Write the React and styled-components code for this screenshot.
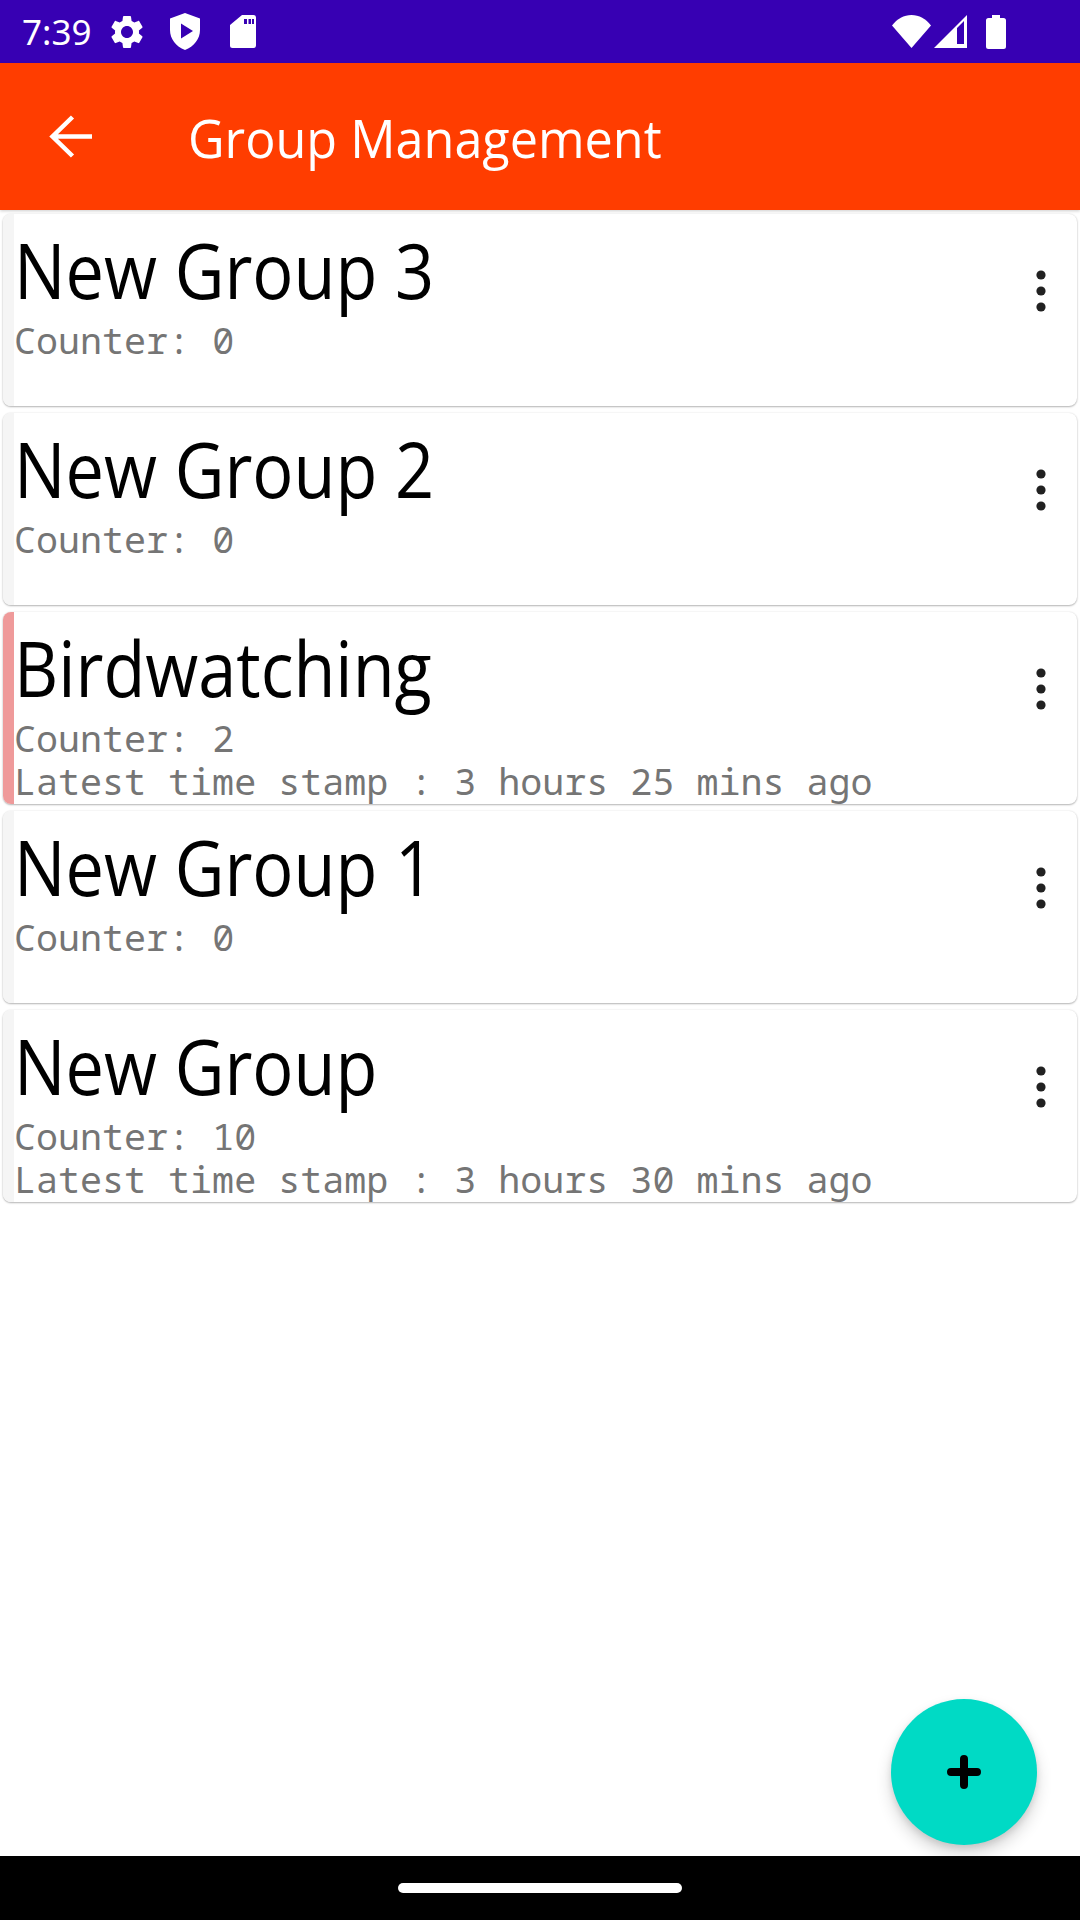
import React from 'react';
import styled, { createGlobalStyle } from 'styled-components';

const GlobalStyle = createGlobalStyle`
  html, body {
    margin: 0;
    padding: 0;
    background: #ffffff;
  }
`;

const Screen = styled.div`
  position: relative;
  width: 1080px;
  height: 1920px;
  display: flex;
  flex-direction: column;
  overflow: hidden;
  background: #ffffff;
  font-family: "Open Sans", "Noto Sans", sans-serif;
`;

const StatusBar = styled.div`
  height: 63px;
  flex: none;
  display: flex;
  align-items: center;
  padding: 0 74px 0 22px;
  background: #3700b3;
  color: #ffffff;
`;

const Clock = styled.span`
  font-family: "Noto Sans", sans-serif;
  font-size: 35px;
  line-height: 63px;
  width: 85px;
`;

const NotifyIcons = styled.div`
  display: flex;
  align-items: center;
  gap: 23px;
  flex: 1;
`;

const SystemIcons = styled.div`
  display: flex;
  align-items: center;
  gap: 3px;
`;

const AppBar = styled.header`
  height: 147px;
  flex: none;
  display: flex;
  align-items: center;
  background: #ff3d00;
  color: #ffffff;
  box-shadow: 0 1px 3px rgba(0, 0, 0, 0.2);
  z-index: 1;
`;

const BackButton = styled.div`
  width: 188px;
  padding-left: 48px;
  box-sizing: border-box;
  display: flex;
  align-items: center;
`;

const AppTitle = styled.h1`
  margin: 3px 0 0;
  font-size: 53px;
  line-height: 72px;
  font-weight: 400;
  transform: scaleX(0.95);
  transform-origin: left center;
`;

const GroupList = styled.main`
  flex: 1;
  padding: 4px 3px 0;
`;

const Card = styled.article`
  height: 192px;
  margin-bottom: 7px;
  display: flex;
  border-radius: 8px;
  overflow: hidden;
  background: #ffffff;
  box-shadow: 0 1px 2px rgba(0, 0, 0, 0.28), 0 0 2px rgba(0, 0, 0, 0.1);
`;

const Stripe = styled.div`
  width: 11px;
  flex: none;
  background: ${({ $active }) => ($active ? '#ef9a9a' : '#f5f5f5')};
`;

const CardBody = styled.div`
  flex: 1;
  min-width: 0;
  padding-top: 7px;
`;

// the reference font is narrower than anything installed, so squeeze Open Sans
const GroupName = styled.div`
  font-size: 76px;
  line-height: 98px;
  color: #000000;
  transform: scaleX(0.9);
  transform-origin: left center;
`;

const Meta = styled.div`
  font-family: "Noto Sans Mono", "DejaVu Sans Mono", monospace;
  font-size: 36.7px;
  line-height: 43px;
  color: #757575;
  white-space: nowrap;
`;

const MenuButton = styled.div`
  width: 72px;
  flex: none;
  padding-top: 56px;
  display: flex;
  justify-content: center;
`;

const Fab = styled.button`
  position: absolute;
  left: 891px;
  top: 1699px;
  width: 146px;
  height: 146px;
  padding: 0;
  border: none;
  border-radius: 50%;
  display: flex;
  align-items: center;
  justify-content: center;
  background: #00dac5;
  box-shadow: 0 9px 16px rgba(0, 0, 0, 0.16), 0 3px 6px rgba(0, 0, 0, 0.1);
`;

const NavBar = styled.footer`
  height: 64px;
  flex: none;
  display: flex;
  align-items: center;
  justify-content: center;
  background: #000000;
  z-index: 2;
`;

const HomePill = styled.div`
  width: 284px;
  height: 10px;
  border-radius: 5px;
  background: #ffffff;
`;

const GearIcon = () => (
  <svg width="40" height="40" viewBox="0 0 24 24" fill="#fff">
    <path d="M19.14 12.94c.04-.3.06-.61.06-.94 0-.32-.02-.64-.07-.94l2.03-1.58c.18-.14.23-.41.12-.61l-1.92-3.32c-.12-.22-.37-.29-.59-.22l-2.39.96c-.5-.38-1.03-.7-1.62-.94l-.36-2.54c-.04-.24-.24-.41-.48-.41h-3.84c-.24 0-.43.17-.47.41l-.36 2.54c-.59.24-1.13.57-1.62.94l-2.39-.96c-.22-.08-.47 0-.59.22L2.74 8.87c-.12.21-.08.47.12.61l2.03 1.58c-.05.3-.09.63-.09.94s.02.64.07.94l-2.03 1.58c-.18.14-.23.41-.12.61l1.92 3.32c.12.22.37.29.59.22l2.39-.96c.5.38 1.03.7 1.62.94l.36 2.54c.05.24.24.41.48.41h3.84c.24 0 .44-.17.47-.41l.36-2.54c.59-.24 1.13-.56 1.62-.94l2.39.96c.22.08.47 0 .59-.22l1.92-3.32c.12-.22.07-.47-.12-.61l-2.01-1.58zM12 15.6c-1.98 0-3.6-1.62-3.6-3.6s1.62-3.6 3.6-3.6 3.6 1.62 3.6 3.6-1.62 3.6-3.6 3.6z" />
  </svg>
);

const ShieldIcon = () => (
  <svg width="30" height="37" viewBox="0 0 30 37">
    <path
      fill="#fff"
      fillRule="evenodd"
      d="M15 0 L30 5.5 V17 C30 26 24 33.5 15 37 C6 33.5 0 26 0 17 V5.5 Z M11 10.5 V25.5 L23 18 Z"
    />
  </svg>
);

const SdCardIcon = () => (
  <svg width="33" height="33" viewBox="-7 0 33 33">
    <path
      fill="#fff"
      fillRule="evenodd"
      d="M12 0 H23.5 A2.5 2.5 0 0 1 26 2.5 V30.5 A2.5 2.5 0 0 1 23.5 33 H2.5 A2.5 2.5 0 0 1 0 30.5 V10 Z M14 4 V9 H17 V4 Z M18.5 4 V9 H21 V4 Z M22 4 V9 H24 V4 Z"
    />
  </svg>
);

const WifiIcon = () => (
  <svg width="39" height="33" viewBox="0 0 39 33">
    <path fill="#fff" d="M0 10.5 C5 4 12 0 19.5 0 C27 0 34 4 39 10.5 L19.5 33 Z" />
  </svg>
);

const SignalIcon = () => (
  <svg width="33" height="33" viewBox="0 0 33 33">
    <path
      fill="#fff"
      fillRule="evenodd"
      d="M33 0 V33 H0 Z M30 6 L23 13 V29 H30 Z"
    />
  </svg>
);

const BatteryIcon = () => (
  <svg width="36" height="34" viewBox="-16 0 36 34">
    <path
      fill="#fff"
      d="M6 0 H14 V3 H17.5 A2.5 2.5 0 0 1 20 5.5 V31.5 A2.5 2.5 0 0 1 17.5 34 H2.5 A2.5 2.5 0 0 1 0 31.5 V5.5 A2.5 2.5 0 0 1 2.5 3 H6 Z"
    />
  </svg>
);

const BackArrow = () => (
  <svg width="46" height="46" viewBox="0 0 46 46" fill="none" stroke="#fff" strokeWidth="4.5">
    <path d="M44 22.5 H5 M24.5 3 L4.5 22.5 L24.5 42" />
  </svg>
);

const KebabIcon = () => (
  <svg width="10" height="42" viewBox="0 0 10 42" fill="#212121">
    <circle cx="5" cy="5" r="4.6" />
    <circle cx="5" cy="21" r="4.6" />
    <circle cx="5" cy="37" r="4.6" />
  </svg>
);

const PlusIcon = () => (
  <svg width="36" height="36" viewBox="0 0 36 36" fill="none" stroke="#000" strokeWidth="8" strokeLinecap="round">
    <path d="M18 5 V31 M5 18 H31" />
  </svg>
);

const groups = [
  { name: 'New Group 3', counter: 0 },
  { name: 'New Group 2', counter: 0 },
  { name: 'Birdwatching', counter: 2, latest: '3 hours 25 mins ago', active: true },
  { name: 'New Group 1', counter: 0 },
  { name: 'New Group', counter: 10, latest: '3 hours 30 mins ago' },
];

export default function App() {
  return (
    <Screen>
      <GlobalStyle />
      <StatusBar>
        <Clock>7:39</Clock>
        <NotifyIcons>
          <GearIcon />
          <ShieldIcon />
          <SdCardIcon />
        </NotifyIcons>
        <SystemIcons>
          <WifiIcon />
          <SignalIcon />
          <BatteryIcon />
        </SystemIcons>
      </StatusBar>
      <AppBar>
        <BackButton>
          <BackArrow />
        </BackButton>
        <AppTitle>Group Management</AppTitle>
      </AppBar>
      <GroupList>
        {groups.map((group) => (
          <Card key={group.name}>
            <Stripe $active={group.active} />
            <CardBody>
              <GroupName>{group.name}</GroupName>
              <Meta>Counter: {group.counter}</Meta>
              {group.latest && <Meta>Latest time stamp : {group.latest}</Meta>}
            </CardBody>
            <MenuButton>
              <KebabIcon />
            </MenuButton>
          </Card>
        ))}
      </GroupList>
      <Fab aria-label="Add group">
        <PlusIcon />
      </Fab>
      <NavBar>
        <HomePill />
      </NavBar>
    </Screen>
  );
}
